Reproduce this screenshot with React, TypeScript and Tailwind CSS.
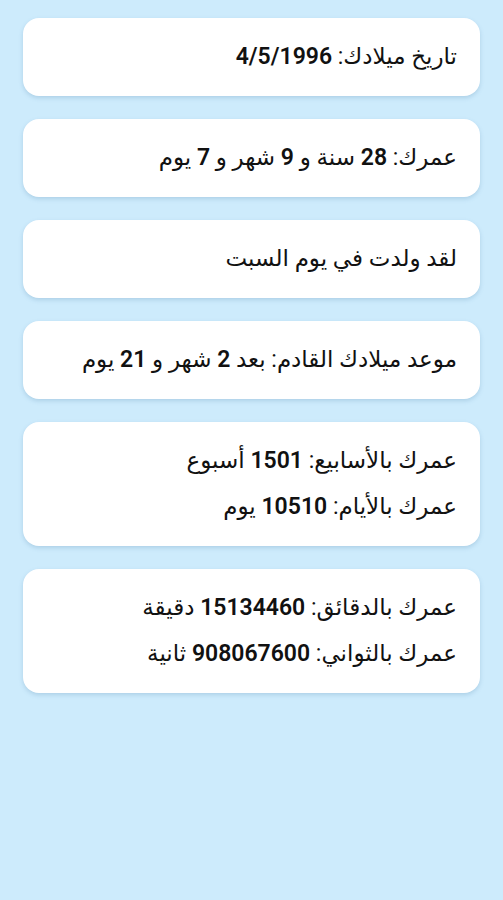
const rows: string[][] = [
  ['تاريخ ميلادك: **4/5/1996'],
  ['عمرك: **28 سنة و **9 شهر و **7 يوم'],
  ['لقد ولدت في يوم السبت'],
  ['موعد ميلادك القادم: بعد **2 شهر و **21 يوم'],
  ['عمرك بالأسابيع: **1501 أسبوع', 'عمرك بالأيام: **10510 يوم'],
  ['عمرك بالدقائق: **15134460 دقيقة', 'عمرك بالثواني: **908067600 ثانية'],
];

// "**" marks a number that is drawn in bold
function Line({ text }: { text: string }) {
  const parts = text.split('**');
  return (
    <p className="leading-[46px]">
      {parts.map((part, i) => {
        if (i === 0) return <span key={i}>{part}</span>;
        const m = part.match(/^(\d[\d/]*)(.*)$/);
        if (!m) return <span key={i}>{part}</span>;
        return (
          <span key={i}>
            <span className="font-semibold">{m[1]}</span>
            {m[2]}
          </span>
        );
      })}
    </p>
  );
}

export default function App() {
  return (
    <div
      dir="rtl"
      className="min-h-[900px] w-full bg-[#cdebfc] px-[23px] pt-[18px] font-['Roboto','DejaVu_Sans',sans-serif] text-[23px] text-[#111]"
    >
      <div className="flex flex-col gap-[23px]">
        {rows.map((lines, i) => (
          <div
            key={i}
            className="rounded-[16px] bg-white px-[23px] py-[16px] shadow-[0_2px_4px_rgba(80,130,170,0.25)]"
          >
            {lines.map((l, j) => (
              <Line key={j} text={l} />
            ))}
          </div>
        ))}
      </div>
    </div>
  );
}
